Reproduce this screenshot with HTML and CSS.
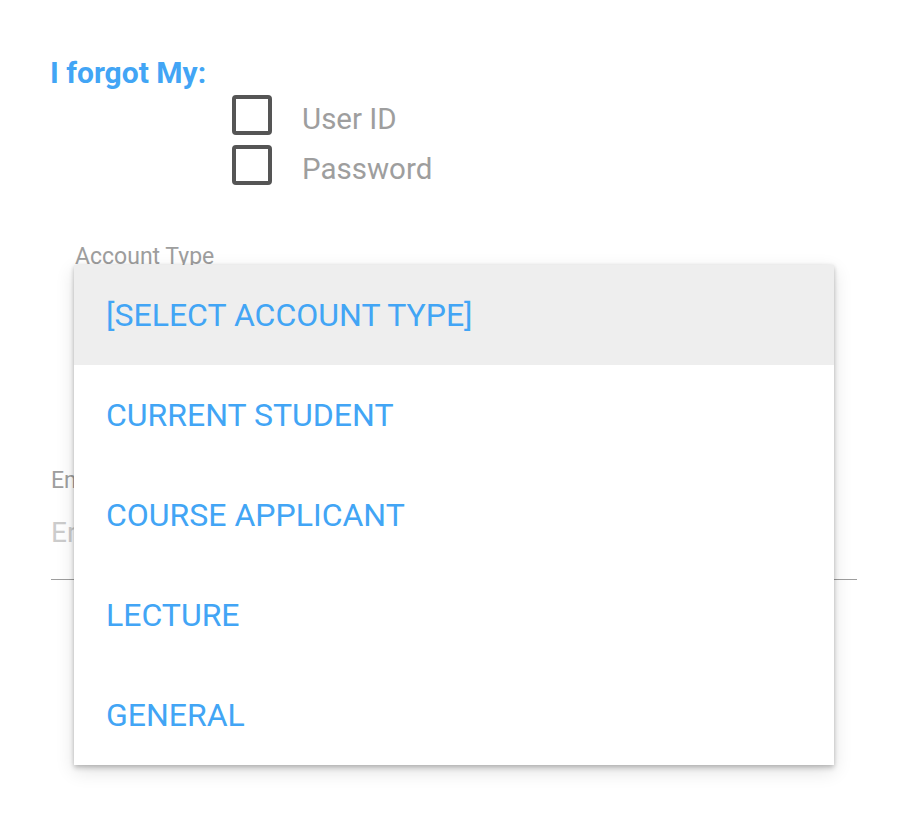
FILE: index.html
```html
<!DOCTYPE html>
<html lang="en">
<head>
<meta charset="utf-8">
<title>Forgot</title>
<link rel="stylesheet" href="styles.css">
</head>
<body>
<main class="page">
  <h1 class="title">I forgot My:</h1>
  <div class="options">
    <label class="option"><span class="box"></span><span class="option-text">User ID</span></label>
    <label class="option"><span class="box"></span><span class="option-text">Password</span></label>
  </div>
  <div class="field field-select">
    <span class="field-label">Account Type</span>
    <div class="select-display"></div>
    <ul class="menu">
      <li class="menu-item selected">[SELECT ACCOUNT TYPE]</li>
      <li class="menu-item">CURRENT STUDENT</li>
      <li class="menu-item">COURSE APPLICANT</li>
      <li class="menu-item">LECTURE</li>
      <li class="menu-item">GENERAL</li>
    </ul>
  </div>
  <div class="field field-email">
    <span class="field-label email-label">Email</span>
    <div class="input"><span class="placeholder">Email</span></div>
  </div>
</main>
</body>
</html>
```

FILE: styles.css
```css
html, body {
  margin: 0;
  padding: 0;
  background: #ffffff;
}
body {
  font-family: Roboto, "Noto Sans", "Liberation Sans", sans-serif;
  min-height: 814px;
}
.page {
  padding: 55px 0 0 50px;
  width: 808px;
  min-height: 759px;
}
.title {
  margin: 0;
  font-size: 30px;
  line-height: 35px;
  font-weight: 700;
  color: #42a5f5;
}
.options {
  display: flex;
  flex-direction: column;
  padding-left: 182px;
}
.option {
  display: flex;
  align-items: center;
  height: 50px;
}
.box {
  width: 32px;
  height: 32px;
  border: 4px solid #555555;
  border-radius: 4px;
  flex: none;
}
.option-text {
  margin-left: 30px;
  font-size: 29.5px;
  line-height: 42px;
  padding-top: 8px;
  color: #9e9e9e;
}
.field-select {
  position: relative;
  z-index: 2;
  margin-top: 53px;
  padding-left: 25px;
}
.field-label {
  display: block;
  font-size: 23px;
  line-height: 27px;
  color: #9e9e9e;
}
.select-display {
  height: 197px;
}
.menu {
  position: absolute;
  left: 24px;
  top: 22px;
  width: 760px;
  margin: 0;
  padding: 0;
  list-style: none;
  background: #ffffff;
  box-shadow: 0 3px 5px rgba(0, 0, 0, 0.2), 0 6px 18px rgba(0, 0, 0, 0.12), 0 0 4px rgba(0, 0, 0, 0.08);
}
.menu-item {
  height: 100px;
  line-height: 100px;
  padding-left: 32px;
  font-size: 32px;
  color: #42a5f5;
}
.menu-item.selected {
  background: #eeeeee;
}
.field-email {
  position: relative;
  z-index: 1;
  padding-left: 1px;
}
.input {
  padding: 19px 0 26px;
  line-height: 40px;
  font-size: 28px;
  border-bottom: 1px solid #9e9e9e;
  width: 806px;
}
.placeholder {
  color: #cccccc;
}
```
